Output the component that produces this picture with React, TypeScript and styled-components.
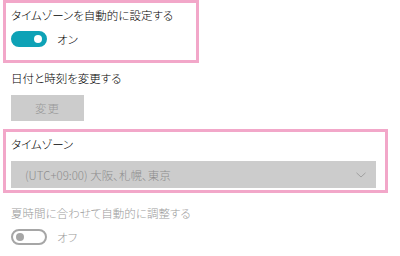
import React from 'react'
import styled, { createGlobalStyle } from 'styled-components'

const GlobalStyle = createGlobalStyle`
  html, body {
    margin: 0;
    padding: 0;
    background: #ffffff;
  }
  body {
    font-family: "Noto Sans CJK JP", "Noto Sans", sans-serif;
    font-weight: 300;
    -webkit-font-smoothing: antialiased;
  }
`

const Page = styled.div`
  width: 400px;
  height: 256px;
  overflow: hidden;
  padding-left: 3px;
  box-sizing: border-box;
  display: flex;
  flex-direction: column;
`

const Group = styled.div<{ $width: number; $marked?: boolean; $height: number; $offset?: number }>`
  box-sizing: border-box;
  width: ${(p) => p.$width}px;
  height: ${(p) => p.$height}px;
  margin-top: ${(p) => p.$offset ?? 0}px;
  border: 3px solid ${(p) => (p.$marked ? '#f2a7c9' : 'transparent')};
  padding: 2px 0 0 5px;
  display: flex;
  flex-direction: column;
  align-items: flex-start;
`

const Label = styled.div<{ $disabled?: boolean }>`
  font-size: 11.5px;
  line-height: 20px;
  font-feature-settings: "palt";
  color: ${(p) => (p.$disabled ? '#9b9b9b' : '#000000')};
  white-space: nowrap;
`

const ToggleRow = styled.div`
  display: flex;
  align-items: center;
  gap: 10px;
  margin-top: 6px;
`

const Track = styled.div<{ $on?: boolean }>`
  box-sizing: border-box;
  width: 36px;
  height: 16px;
  border-radius: 8px;
  background: ${(p) => (p.$on ? '#0ea2b6' : 'transparent')};
  border: 2px solid ${(p) => (p.$on ? '#0ea2b6' : '#a6a6a6')};
  display: flex;
  align-items: center;
  justify-content: ${(p) => (p.$on ? 'flex-end' : 'flex-start')};
  padding: 0 3px;
`

const Knob = styled.div<{ $on?: boolean }>`
  width: 8px;
  height: 8px;
  border-radius: 50%;
  background: ${(p) => (p.$on ? '#ffffff' : '#a6a6a6')};
`

const StateText = styled.span<{ $disabled?: boolean }>`
  font-size: 11.5px;
  font-feature-settings: "palt";
  color: ${(p) => (p.$disabled ? '#9b9b9b' : '#000000')};
`

const Button = styled.div`
  margin-top: 7px;
  width: 73px;
  height: 26px;
  background: #cccccc;
  color: #999999;
  font-size: 11.5px;
  display: flex;
  align-items: center;
  justify-content: center;
  letter-spacing: 1px;
`

const Select = styled.div`
  margin-top: 7px;
  box-sizing: border-box;
  width: 365px;
  height: 27px;
  background: #cccccc;
  color: #8c8c8c;
  font-size: 11.5px;
  font-feature-settings: "palt";
  display: flex;
  align-items: center;
  justify-content: space-between;
  padding: 0 10px 0 14px;
`

const Chevron = () => (
  <svg width="10" height="6" viewBox="0 0 10 6">
    <path d="M0.5 0.8 L5 5 L9.5 0.8" fill="none" stroke="#a0a0a0" strokeWidth="1" />
  </svg>
)

const Toggle: React.FC<{ on?: boolean; label: string; disabled?: boolean }> = ({ on, label, disabled }) => (
  <ToggleRow>
    <Track $on={on}>
      <Knob $on={on} />
    </Track>
    <StateText $disabled={disabled}>{label}</StateText>
  </ToggleRow>
)

export default function App() {
  return (
    <>
      <GlobalStyle />
      <Page>
        <Group $width={196} $height={63} $marked>
          <Label>タイムゾーンを自動的に設定する</Label>
          <Toggle on label="オン" />
        </Group>
        <Group $width={196} $height={66}>
          <Label>日付と時刻を変更する</Label>
          <Button>変更</Button>
        </Group>
        <Group $width={385} $height={64} $marked>
          <Label>タイムゾーン</Label>
          <Select>
            <span>(UTC+09:00) 大阪、札幌、東京</span>
            <Chevron />
          </Select>
        </Group>
        <Group $width={196} $height={58} $offset={5}>
          <Label $disabled>夏時間に合わせて自動的に調整する</Label>
          <Toggle label="オフ" disabled />
        </Group>
      </Page>
    </>
  )
}
